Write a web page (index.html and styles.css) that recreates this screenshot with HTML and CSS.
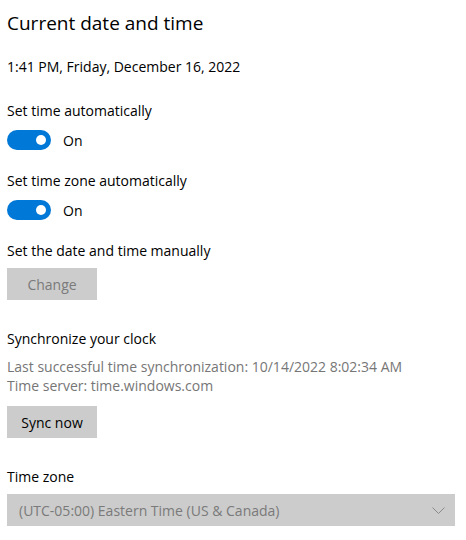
FILE: index.html
```html
<!DOCTYPE html>
<html>
<head>
<meta charset="utf-8">
<link rel="stylesheet" href="styles.css">
</head>
<body>
<main class="page">
  <h1 class="title">Current date and time</h1>
  <p class="now">1:41 PM, Friday, December 16, 2022</p>

  <p class="label label-first">Set time automatically</p>
  <div class="toggle-row">
    <span class="toggle"><span class="knob"></span></span>
    <span class="toggle-text">On</span>
  </div>

  <p class="label">Set time zone automatically</p>
  <div class="toggle-row">
    <span class="toggle"><span class="knob"></span></span>
    <span class="toggle-text">On</span>
  </div>

  <p class="label">Set the date and time manually</p>
  <button class="btn btn-disabled" disabled>Change</button>

  <p class="label label-section">Synchronize your clock</p>
  <p class="info info-first">Last successful time synchronization: 10/14/2022 8:02:34 AM</p>
  <p class="info">Time server: time.windows.com</p>
  <button class="btn btn-sync">Sync now</button>

  <p class="label label-section">Time zone</p>
  <div class="select">
    <span class="select-text">(UTC-05:00) Eastern Time (US &amp; Canada)</span>
    <svg class="chevron" width="13" height="7" viewBox="0 0 13 7"><path d="M0.5 0.5 L6.5 6.5 L12.5 0.5" fill="none" stroke="#8a8a8a" stroke-width="1"/></svg>
  </div>
</main>
</body>
</html>
```
FILE: styles.css
```css
html, body {
  margin: 0;
  padding: 0;
  background: #ffffff;
}
body {
  font-family: "Segoe UI", "Open Sans", "Noto Sans", sans-serif;
  color: #000000;
  font-size: 14px;
  line-height: 19px;
}
.page {
  padding: 9px 0 0 7px;
  width: 448px;
}
.title {
  margin: 0;
  font-size: 19px;
  line-height: 28px;
  font-weight: 400;
}
p {
  margin: 0;
}
.now {
  margin-top: 20px;
}
.label {
  margin-top: 21px;
}
.label-first {
  margin-top: 25px;
}
.label-section {
  margin-top: 29px;
}
.toggle-row {
  margin-top: 10px;
  display: flex;
  align-items: center;
  height: 20px;
}
.toggle {
  width: 44px;
  height: 20px;
  border-radius: 10px;
  background: #0078d7;
  display: flex;
  align-items: center;
  justify-content: flex-end;
  box-sizing: border-box;
  padding-right: 5px;
}
.knob {
  width: 10px;
  height: 10px;
  border-radius: 50%;
  background: #ffffff;
}
.toggle-text {
  margin-left: 12px;
}
.btn {
  display: block;
  margin-top: 8px;
  width: 90px;
  height: 32px;
  border: none;
  background: #cccccc;
  font: inherit;
  padding: 0;
}
.btn-disabled {
  color: #7a7a7a;
}
.btn-sync {
  margin-top: 11px;
  color: #000000;
}
.info {
  color: #767676;
}
.info-first {
  margin-top: 9px;
}
.select {
  margin-top: 8px;
  width: 448px;
  height: 32px;
  background: #cccccc;
  display: flex;
  align-items: center;
  justify-content: space-between;
  box-sizing: border-box;
  padding: 0 10px 0 12px;
  color: #7a7a7a;
}
.chevron {
  display: block;
}
```
